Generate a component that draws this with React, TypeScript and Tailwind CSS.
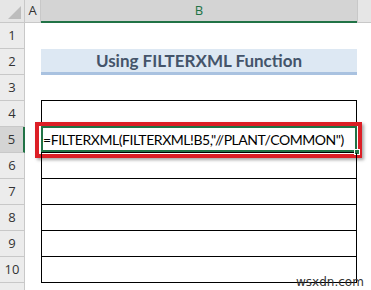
import React from "react";

const rows = [1, 2, 3, 4, 5, 6, 7, 8, 9, 10, 11];

function BCell({ n }: { n: number }) {
  if (n === 2) {
    return (
      <div className="w-[316px] h-full bg-[#dde8f3] border-b-[3px] border-[#a9c2e0] flex items-center justify-center">
        <span className="text-[17px] font-bold text-[#44546a]" style={{ fontFamily: "Lato, 'Open Sans', sans-serif" }}>
          Using FILTERXML Function
        </span>
      </div>
    );
  }
  if (n === 3) {
    return <div className="w-[316px] h-full border-b border-black" />;
  }
  if (n >= 4 && n <= 10) {
    return (
      <div className="w-[316px] h-full border-b border-x border-black relative">
        {n === 5 && (
          <>
            <div className="absolute -left-[7px] -right-[6px] -top-[5px] -bottom-[6px] border-[4px] border-[#dc1f26] shadow-[2px_2px_3px_rgba(0,0,0,0.35)]" />
            <div className="absolute -left-[1px] -right-[1px] -top-[1px] bottom-0 border-2 border-[#217346]" />
            <div className="absolute -right-[4px] -bottom-[3px] w-[6px] h-[6px] bg-[#217346] border border-white" />
            <div className="absolute left-[1px] top-0 bottom-0 flex items-center">
              <span className="text-[14px] text-black whitespace-nowrap tracking-[-0.45px]" style={{ fontFamily: "Lato, 'Open Sans', sans-serif" }}>
                =FILTERXML(FILTERXML!B5,"//PLANT/COMMON")
              </span>
            </div>
          </>
        )}
      </div>
    );
  }
  return <div className="w-[316px] h-full" />;
}

export default function App() {
  return (
    <div className="w-[371px] h-[290px] overflow-hidden bg-white relative" style={{ fontFamily: "'Open Sans', 'Noto Sans', sans-serif" }}>
      <div className="flex h-[23px]">
        <div className="w-[25px] h-full bg-[#e6e6e6] border-r border-b border-[#c8c8c8] relative">
          <div className="absolute right-[3px] bottom-[3px] w-0 h-0 border-l-[13px] border-l-transparent border-b-[13px] border-b-[#bdbdbd]" />
        </div>
        <div className="w-[16px] h-full bg-[#e6e6e6] border-r border-b border-[#c8c8c8] flex items-center justify-center text-[13px] text-[#333]">
          A
        </div>
        <div className="w-[316px] h-full bg-[#d4d4d4] border-b-2 border-[#217346] flex items-center justify-center text-[13px] text-[#217346]">
          B
        </div>
        <div className="flex-1 h-full bg-[#e6e6e6] border-l border-b border-[#c8c8c8]" />
      </div>
      {rows.map((n) => (
        <div key={n} className="flex h-[26px]">
          <div
            className={
              n === 5
                ? "w-[25px] h-full bg-[#d4d4d4] border-r-2 border-r-[#217346] border-b border-b-[#c8c8c8] flex items-center justify-center text-[13px] text-[#333]"
                : "w-[25px] h-full bg-[#ececec] border-r border-r-[#c8c8c8] border-b border-b-[#c8c8c8] flex items-center justify-center text-[13px] text-[#333]"
            }
          >
            {n <= 10 ? n : ""}
          </div>
          <div className="w-[16px] h-full" />
          <BCell n={n} />
          <div className="flex-1 h-full" />
        </div>
      ))}
      <div className="absolute left-[296px] top-[276px] text-[12px] text-[#333] leading-none" style={{ fontFamily: "'DejaVu Sans', sans-serif" }}>
        wsxdn.com
      </div>
    </div>
  );
}
